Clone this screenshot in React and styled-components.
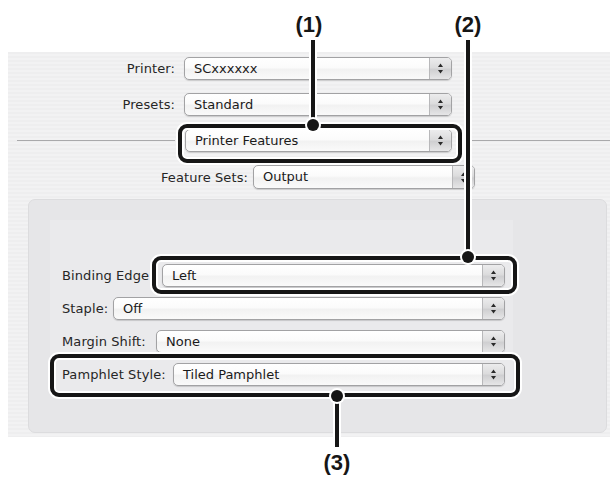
import React from "react";
import styled, { createGlobalStyle } from "styled-components";

const Global = createGlobalStyle`
  html, body { margin: 0; padding: 0; background: #fff; }
  * { box-sizing: border-box; }
`;

const Root = styled.div`
  position: relative;
  width: 610px;
  height: 477px;
  overflow: hidden;
  background: #fff;
  padding-top: 52px;
  font-family: "DejaVu Sans", "Noto Sans", sans-serif;
  font-size: 13px;
  color: #262626;
`;

const Window = styled.div`
  margin-left: 8px;
  height: 385px;
  display: flex;
  flex-direction: column;
  background: repeating-linear-gradient(180deg, #eeeeef 0 2px, #f2f2f3 2px 4px);
`;

const FormGrid = styled.div`
  display: grid;
  grid-template-columns: 167px 268px 1fr;
  grid-auto-rows: 23px;
  column-gap: 9px;
  row-gap: 13px;
  padding-top: 5px;
  align-items: center;
`;

const Label = styled.div`
  text-align: ${(p) => (p.$right ? "right" : "left")};
  white-space: nowrap;
  flex-shrink: 0;
  width: ${(p) => (p.$w ? `${p.$w}px` : "auto")};
  line-height: 23px;
  letter-spacing: 0.1px;
`;

const Rule = styled.div`
  height: 1px;
  background: #a9a9ab;
  margin-left: ${(p) => p.$indent || 0}px;
`;

const FeatureRow = styled.div`
  display: flex;
  align-items: center;
  height: 24px;
  margin-top: 13px;
  gap: 5px;
`;

const PopupBox = styled.div`
  position: relative;
  display: flex;
  align-items: stretch;
  height: ${(p) => p.$h || 23}px;
  width: ${(p) => (p.$w ? `${p.$w}px` : "auto")};
  flex: ${(p) => (p.$w ? "0 0 auto" : "1 1 auto")};
  margin-left: ${(p) => p.$ml || 0}px;
  border: 1px solid #a2a2a4;
  border-radius: 5px;
  background: linear-gradient(180deg, #ffffff 0%, #fbfbfb 45%, #f2f2f2 55%, #fafafa 100%);
  box-shadow: 0 1px 1px rgba(0, 0, 0, 0.15);
  overflow: hidden;
`;

const PopupText = styled.div`
  flex: 1;
  padding-left: 9px;
  line-height: ${(p) => (p.$h || 23) - 2}px;
  white-space: nowrap;
  color: #1a1a1a;
`;

const Arrows = styled.div`
  width: 22px;
  flex-shrink: 0;
  border-left: 1px solid #b8b8ba;
  background: linear-gradient(180deg, #ececed 0%, #dcdcdd 45%, #cfcfd1 55%, #e6e6e7 100%);
  display: flex;
  align-items: center;
  justify-content: center;
`;

const Panel = styled.div`
  margin: 10px 3px 0 20px;
  height: 234px;
  border-radius: 7px;
  background: #e6e6e8;
  border: 1px solid #dcdcde;
  padding: 20px 93px 0 21px;
`;

const Inner = styled.div`
  background: #eaeaec;
  height: 172px;
  padding: 44px 8px 0 12px;
  display: flex;
  flex-direction: column;
  gap: 10px;
`;

const Row = styled.div`
  display: flex;
  align-items: center;
  height: 23px;
`;

const Halo = "0 0 0 2px #fff";

const CalloutBox = styled.div`
  position: absolute;
  left: ${(p) => p.$x}px;
  top: ${(p) => p.$y}px;
  width: ${(p) => p.$w}px;
  height: ${(p) => p.$h}px;
  border: 4px solid #161616;
  border-radius: 9px;
  box-shadow: ${Halo}, inset ${Halo};
`;

const CalloutLine = styled.div`
  position: absolute;
  left: ${(p) => p.$x - 2}px;
  top: ${(p) => p.$y}px;
  width: 4px;
  height: ${(p) => p.$h}px;
  background: #161616;
  box-shadow: ${Halo};
`;

const Dot = styled.div`
  position: absolute;
  left: ${(p) => p.$x - 6}px;
  top: ${(p) => p.$y - 6}px;
  width: 12px;
  height: 12px;
  border-radius: 50%;
  background: #161616;
  box-shadow: ${Halo};
`;

const Tag = styled.div`
  position: absolute;
  left: ${(p) => p.$x}px;
  top: ${(p) => p.$y}px;
  width: 40px;
  margin-left: -20px;
  text-align: center;
  font-family: "Liberation Sans", Arial, sans-serif;
  font-weight: bold;
  font-size: 22px;
  line-height: 24px;
  color: #161616;
`;

function Stepper() {
  return (
    <svg width="7" height="13" viewBox="0 0 7 13">
      <path d="M3.5 1.5 L6 5 L1 5 Z" fill="#2a2a2a" />
      <path d="M3.5 11.5 L6 8 L1 8 Z" fill="#2a2a2a" />
    </svg>
  );
}

function Popup({ value, w, ml, h }) {
  return (
    <PopupBox $w={w} $ml={ml} $h={h}>
      <PopupText $h={h}>{value}</PopupText>
      <Arrows>
        <Stepper />
      </Arrows>
    </PopupBox>
  );
}

const panelRows = [
  { label: "Binding Edge:", w: 100, value: "Left" },
  { label: "Staple:", w: 51, value: "Off" },
  { label: "Margin Shift:", w: 94, value: "None" },
  { label: "Pamphlet Style:", w: 111, value: "Tiled Pamphlet" },
];

export default function App() {
  return (
    <>
      <Global />
      <Root>
        <Window>
          <FormGrid>
            <Label $right>Printer:</Label>
            <Popup value="SCxxxxxx" />
            <div />
            <Label $right>Presets:</Label>
            <Popup value="Standard" />
            <div />
            <Rule $indent={9} />
            <Popup value="Printer Features" ml={1} w={267} />
            <Rule />
          </FormGrid>
          <FeatureRow>
            <Label $right $w={240}>Feature Sets:</Label>
            <Popup value="Output" w={222} h={24} />
          </FeatureRow>
          <Panel>
            <Inner>
              {panelRows.map((r) => (
                <Row key={r.label}>
                  <Label $w={r.w}>{r.label}</Label>
                  <Popup value={r.value} />
                </Row>
              ))}
            </Inner>
          </Panel>
        </Window>

        <CalloutBox $x={178} $y={124} $w={284} $h={39} />
        <CalloutLine $x={313} $y={40} $h={85} />
        <Dot $x={313} $y={125} />
        <Tag $x={309} $y={13}>(1)</Tag>

        <CalloutBox $x={152} $y={256} $w={365} $h={38} />
        <CalloutLine $x={468} $y={40} $h={217} />
        <Dot $x={468} $y={257} />
        <Tag $x={468} $y={13}>(2)</Tag>

        <CalloutBox $x={50} $y={354} $w={470} $h={43} />
        <CalloutLine $x={337} $y={396} $h={51} />
        <Dot $x={337} $y={396} />
        <Tag $x={337} $y={451}>(3)</Tag>
      </Root>
    </>
  );
}
